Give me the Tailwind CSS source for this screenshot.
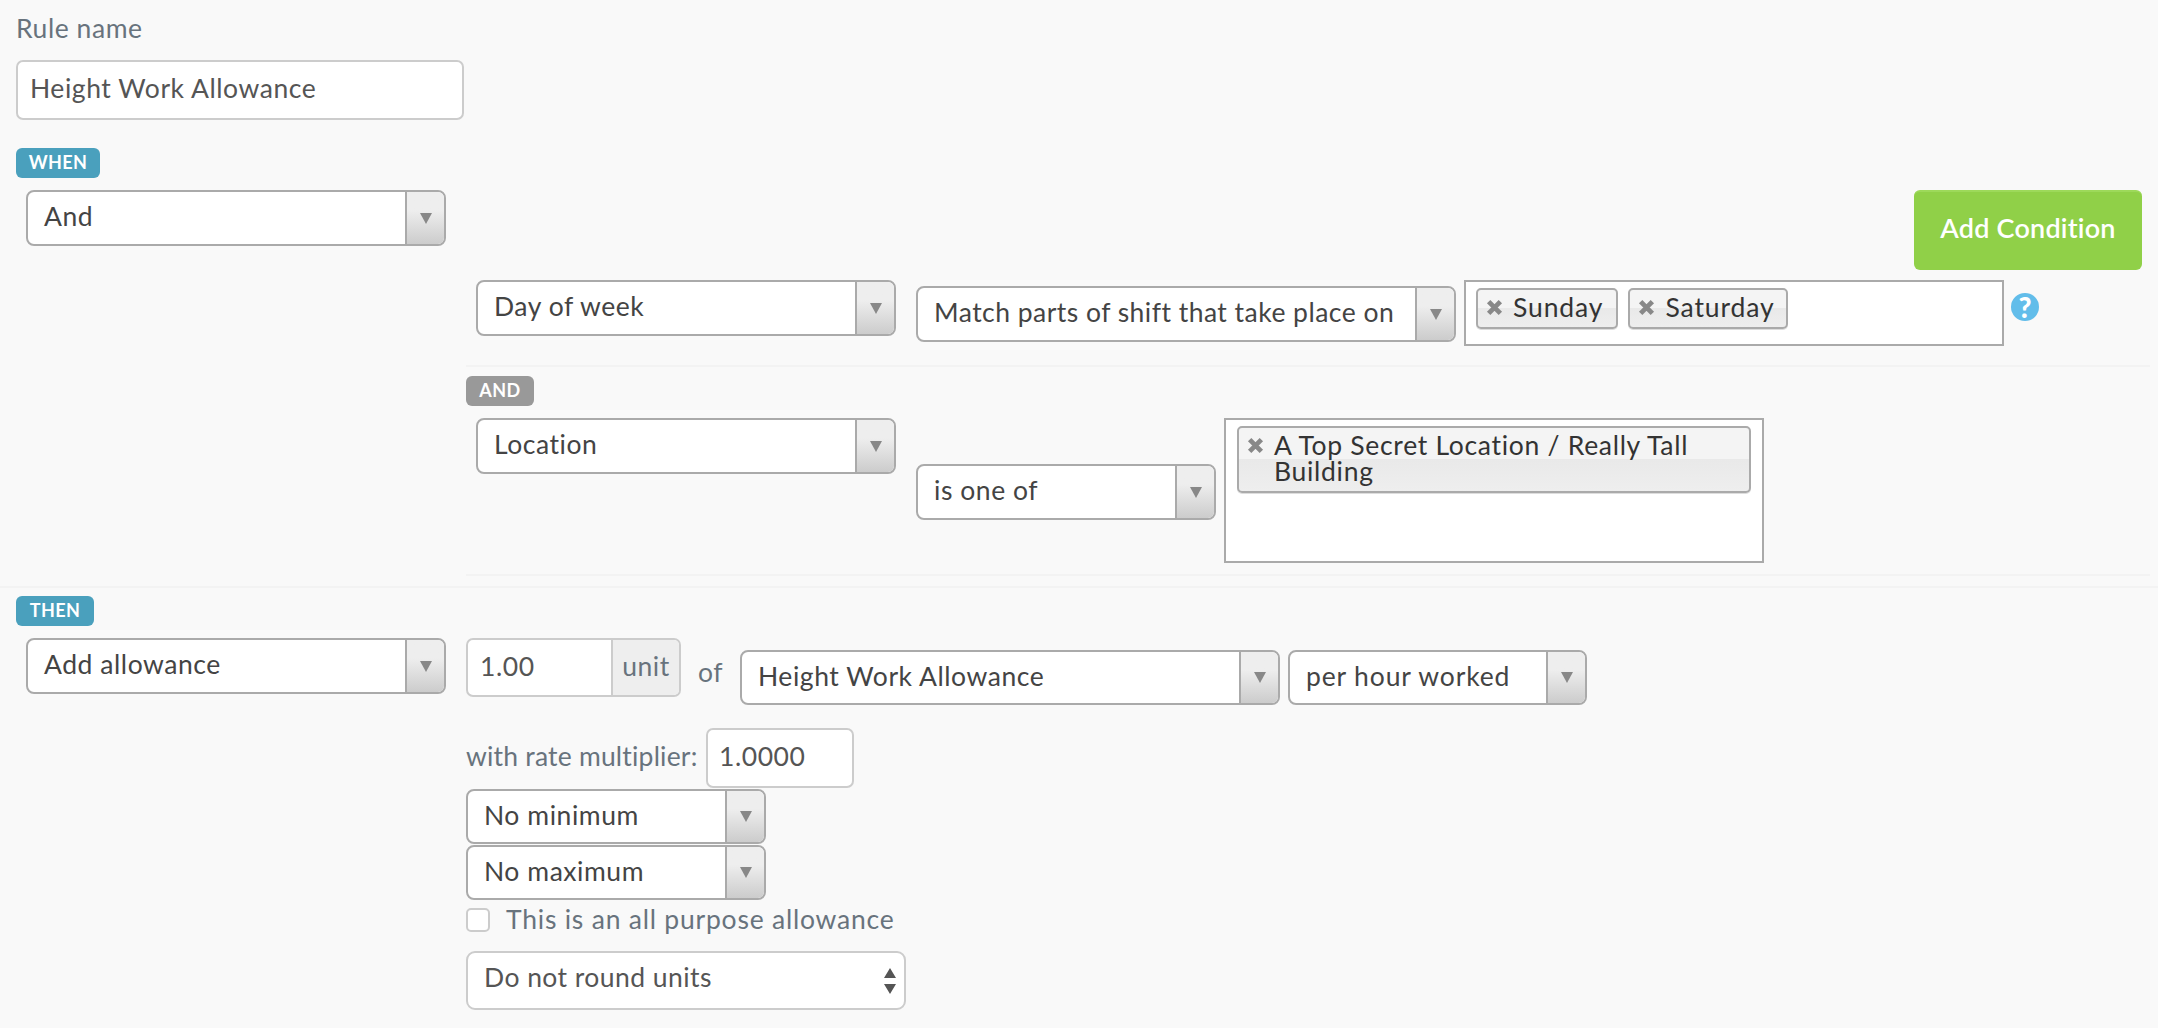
<!DOCTYPE html>
<html lang="en">
<head>
  <meta charset="UTF-8" />
  <title>Rule editor</title>
  <script src="https://cdn.jsdelivr.net/npm/@tailwindcss/browser@4"></script>
</head>
<body class="bg-[#f9f9f9] font-['Lato',sans-serif] text-[26.5px] tracking-[0.55px] text-[#444] h-[1028px] overflow-hidden">
  <div class="pl-4">
    <!-- rule name -->
    <div class="h-[60px] pt-[10px] text-[#68737d] leading-[36px]">Rule name</div>
    <div class="w-[448px] h-[60px] bg-white border-2 border-[#ccc] rounded-[7px] pl-[12px] pb-[2px] flex items-center text-[#555]">Height Work Allowance</div>

    <!-- when -->
    <div class="mt-[28px] w-[84px] h-[30px] pb-[2px] rounded-[6px] bg-[#4aa0bd] text-white text-[18px] tracking-[0.4px] font-bold flex items-center justify-center">WHEN</div>
    <div class="flex">
      <div class="ml-[10px] mt-[12px] w-[420px] h-[56px] flex bg-white border-2 border-[#aaa] rounded-[8px] shrink-0">
        <div class="flex-1 pl-[16px] pb-[2px] flex items-center">And</div>
        <div class="w-[39px] border-l-2 border-[#aaa] rounded-r-[6px] bg-linear-to-b from-[#eee] from-35% to-[#ccc] flex items-center justify-center">
          <svg width="12" height="11" viewBox="0 0 12 11"><path d="M0 0h12L6 11z" fill="#888"/></svg>
        </div>
      </div>
      <div class="ml-[20px] flex-1 pr-2">
        <div class="flex justify-end pr-[8px] pt-[12px]">
          <div class="w-[228px] h-[80px] pb-[5px] rounded-[6px] bg-[#90d048] border-t-2 border-[#9dd95a] text-white text-[27px] tracking-[0.2px] font-semibold flex items-center justify-center">Add Condition</div>
        </div>

        <!-- day of week -->
        <div class="flex items-start pl-[10px] mt-[10px] h-[87px] border-b-2 border-[#f3f3f3]">
          <div class="w-[420px] h-[56px] flex bg-white border-2 border-[#aaa] rounded-[8px] shrink-0">
            <div class="flex-1 pl-[16px] pb-[2px] flex items-center">Day of week</div>
            <div class="w-[39px] border-l-2 border-[#aaa] rounded-r-[6px] bg-linear-to-b from-[#eee] from-35% to-[#ccc] flex items-center justify-center">
              <svg width="12" height="11" viewBox="0 0 12 11"><path d="M0 0h12L6 11z" fill="#888"/></svg>
            </div>
          </div>
          <div class="ml-[20px] mt-[6px] w-[540px] h-[56px] flex bg-white border-2 border-[#aaa] rounded-[8px] shrink-0">
            <div class="flex-1 pl-[16px] pb-[2px] flex items-center whitespace-nowrap tracking-[0.47px]">Match parts of shift that take place on</div>
            <div class="w-[39px] border-l-2 border-[#aaa] rounded-r-[6px] bg-linear-to-b from-[#eee] from-35% to-[#ccc] flex items-center justify-center">
              <svg width="12" height="11" viewBox="0 0 12 11"><path d="M0 0h12L6 11z" fill="#888"/></svg>
            </div>
          </div>
          <div class="ml-[8px] w-[540px] h-[66px] bg-white border-2 border-[#aaa] flex gap-[10px] pl-[10px] pt-[6px] shrink-0">
            <div class="h-[41px] pl-[8px] pr-[13px] pb-[2px] flex items-center gap-[10px] border-2 border-[#aaa] rounded-[5px] bg-[linear-gradient(#f4f4f4_50%,#e9e9e9_50%,#eee)] text-[#333] tracking-[0.9px] shadow-[0_1px_0_#ddd]">
              <svg width="17" height="17" viewBox="0 0 16 16"><path d="M2.5 2.5l11 11M13.5 2.5l-11 11" stroke="#888" stroke-width="4.5"/></svg>
              <span>Sunday</span>
            </div>
            <div class="h-[41px] pl-[8px] pr-[11px] pb-[2px] flex items-center gap-[10px] border-2 border-[#aaa] rounded-[5px] bg-[linear-gradient(#f4f4f4_50%,#e9e9e9_50%,#eee)] text-[#333] tracking-[0.9px] shadow-[0_1px_0_#ddd]">
              <svg width="17" height="17" viewBox="0 0 16 16"><path d="M2.5 2.5l11 11M13.5 2.5l-11 11" stroke="#888" stroke-width="4.5"/></svg>
              <span>Saturday</span>
            </div>
          </div>
          <div class="ml-[7px] mt-[13px] w-[28px] h-[28px] rounded-full bg-[#62bdea] text-white text-[28px] tracking-normal font-black flex items-center justify-center">?</div>
        </div>

        <!-- location -->
        <div class="mt-[9px] w-[68px] h-[30px] pb-[2px] rounded-[6px] bg-[#999] text-white text-[18px] tracking-[0.4px] font-bold flex items-center justify-center">AND</div>
        <div class="flex items-start pl-[10px] mt-[12px] h-[158px] border-b-2 border-[#f3f3f3]">
          <div class="w-[420px] h-[56px] flex bg-white border-2 border-[#aaa] rounded-[8px] shrink-0">
            <div class="flex-1 pl-[16px] pb-[2px] flex items-center">Location</div>
            <div class="w-[39px] border-l-2 border-[#aaa] rounded-r-[6px] bg-linear-to-b from-[#eee] from-35% to-[#ccc] flex items-center justify-center">
              <svg width="12" height="11" viewBox="0 0 12 11"><path d="M0 0h12L6 11z" fill="#888"/></svg>
            </div>
          </div>
          <div class="ml-[20px] mt-[46px] w-[300px] h-[56px] flex bg-white border-2 border-[#aaa] rounded-[8px] shrink-0">
            <div class="flex-1 pl-[16px] pb-[2px] flex items-center">is one of</div>
            <div class="w-[39px] border-l-2 border-[#aaa] rounded-r-[6px] bg-linear-to-b from-[#eee] from-35% to-[#ccc] flex items-center justify-center">
              <svg width="12" height="11" viewBox="0 0 12 11"><path d="M0 0h12L6 11z" fill="#888"/></svg>
            </div>
          </div>
          <div class="ml-[8px] w-[540px] h-[145px] bg-white border-2 border-[#aaa] px-[11px] pt-[6px] shrink-0">
            <div class="h-[67px] pl-[8px] pr-[9px] pt-[4px] flex items-start gap-[10px] border-2 border-[#aaa] rounded-[5px] bg-[linear-gradient(#f4f4f4_50%,#e9e9e9_50%,#eee)] text-[#333] tracking-[0.7px] leading-[26px] shadow-[0_1px_0_#ddd]">
              <svg class="mt-[5px] shrink-0" width="17" height="17" viewBox="0 0 16 16"><path d="M2.5 2.5l11 11M13.5 2.5l-11 11" stroke="#888" stroke-width="4.5"/></svg>
              <span>A Top Secret Location / Really Tall Building</span>
            </div>
          </div>
        </div>
      </div>
    </div>
  </div>

  <div class="mt-[10px] pl-4 pt-[8px] border-t-2 border-[#f3f3f3]">
    <!-- then -->
    <div class="w-[78px] h-[30px] pb-[2px] rounded-[6px] bg-[#4aa0bd] text-white text-[18px] tracking-[0.4px] font-bold flex items-center justify-center">THEN</div>
    <div class="flex items-start">
      <div class="ml-[10px] mt-[12px] w-[420px] h-[56px] flex bg-white border-2 border-[#aaa] rounded-[8px] shrink-0">
        <div class="flex-1 pl-[16px] pb-[2px] flex items-center">Add allowance</div>
        <div class="w-[39px] border-l-2 border-[#aaa] rounded-r-[6px] bg-linear-to-b from-[#eee] from-35% to-[#ccc] flex items-center justify-center">
          <svg width="12" height="11" viewBox="0 0 12 11"><path d="M0 0h12L6 11z" fill="#888"/></svg>
        </div>
      </div>
      <div class="ml-[20px] mt-[12px]">
        <div class="flex items-start">
          <div class="w-[215px] h-[59px] flex border-2 border-[#ccc] rounded-[7px] bg-white overflow-hidden text-[#555]">
            <div class="flex-1 pl-[12px] pb-[2px] flex items-center">1.00</div>
            <div class="w-[68px] pb-[2px] border-l-2 border-[#ccc] bg-[#eee] flex items-center justify-center text-[#68737d]">unit</div>
          </div>
          <div class="w-[59px] mt-[15px] text-center text-[#68737d]">of</div>
          <div class="mt-[12px] w-[540px] h-[55px] flex bg-white border-2 border-[#aaa] rounded-[8px] shrink-0">
            <div class="flex-1 pl-[16px] pb-[2px] flex items-center">Height Work Allowance</div>
            <div class="w-[39px] border-l-2 border-[#aaa] rounded-r-[6px] bg-linear-to-b from-[#eee] from-35% to-[#ccc] flex items-center justify-center">
              <svg width="12" height="11" viewBox="0 0 12 11"><path d="M0 0h12L6 11z" fill="#888"/></svg>
            </div>
          </div>
          <div class="ml-[8px] mt-[12px] w-[299px] h-[55px] flex bg-white border-2 border-[#aaa] rounded-[8px] shrink-0">
            <div class="flex-1 pl-[16px] pb-[2px] flex items-center tracking-[0.85px]">per hour worked</div>
            <div class="w-[39px] border-l-2 border-[#aaa] rounded-r-[6px] bg-linear-to-b from-[#eee] from-35% to-[#ccc] flex items-center justify-center">
              <svg width="12" height="11" viewBox="0 0 12 11"><path d="M0 0h12L6 11z" fill="#888"/></svg>
            </div>
          </div>
        </div>

        <div class="flex items-center mt-[23px] h-[60px]">
          <div class="text-[#68737d] w-[240px] pb-[3px] whitespace-nowrap tracking-[0.2px]">with rate multiplier:</div>
          <div class="w-[148px] h-[60px] bg-white border-2 border-[#ccc] rounded-[7px] pl-[11px] pb-[2px] flex items-center text-[#555]">1.0000</div>
        </div>
        <div class="mt-[1px] w-[300px] h-[55px] flex bg-white border-2 border-[#aaa] rounded-[8px]">
          <div class="flex-1 pl-[16px] pb-[2px] flex items-center">No minimum</div>
          <div class="w-[39px] border-l-2 border-[#aaa] rounded-r-[6px] bg-linear-to-b from-[#eee] from-35% to-[#ccc] flex items-center justify-center">
            <svg width="12" height="11" viewBox="0 0 12 11"><path d="M0 0h12L6 11z" fill="#888"/></svg>
          </div>
        </div>
        <div class="mt-[1px] w-[300px] h-[55px] flex bg-white border-2 border-[#aaa] rounded-[8px]">
          <div class="flex-1 pl-[16px] pb-[2px] flex items-center">No maximum</div>
          <div class="w-[39px] border-l-2 border-[#aaa] rounded-r-[6px] bg-linear-to-b from-[#eee] from-35% to-[#ccc] flex items-center justify-center">
            <svg width="12" height="11" viewBox="0 0 12 11"><path d="M0 0h12L6 11z" fill="#888"/></svg>
          </div>
        </div>
        <div class="flex items-center mt-[8px] h-[24px] text-[#68737d]">
          <div class="w-[24px] h-[24px] bg-white border-2 border-[#ccc] rounded-[5px]"></div>
          <div class="ml-[16px] whitespace-nowrap tracking-[0.78px]">This is an all purpose allowance</div>
        </div>
        <div class="mt-[19px] w-[440px] h-[59px] bg-white border-2 border-[#ccc] rounded-[9px] pl-[16px] pr-[7px] flex items-center justify-between">
          <span class="text-[#555] pb-[5px] tracking-[0.45px]">Do not round units</span>
          <svg width="14" height="26" viewBox="0 0 14 26"><path d="M7 0l6 10H1zM7 26l-6-10h12z" fill="#555"/></svg>
        </div>
      </div>
    </div>
  </div>
</body>
</html>
